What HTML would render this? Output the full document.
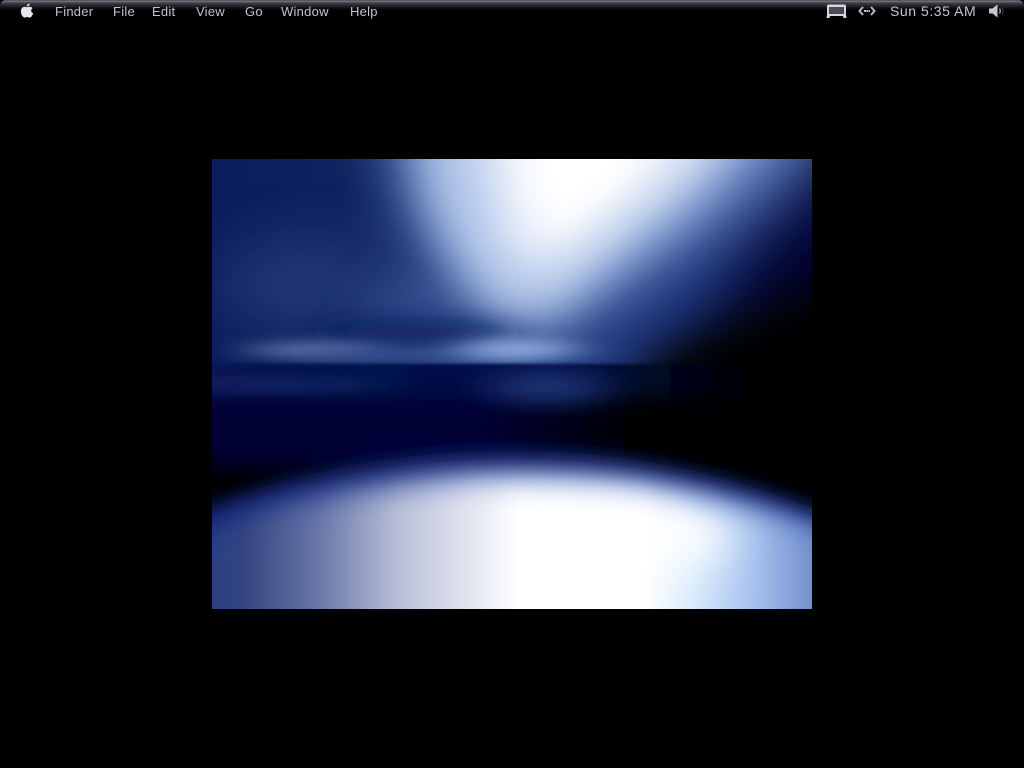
<!DOCTYPE html>
<html><head><meta charset="utf-8"><style>
html,body{margin:0;padding:0;background:#000;width:1024px;height:768px;overflow:hidden}
#bar{position:absolute;left:0;top:0;width:1024px;height:10px;background:linear-gradient(#2a2a30 0,#85858c 1px,#55555c 2px,#33333a 4px,#1a1a1f 7px,#000 10px);border-radius:6px 6px 0 0}
.m{position:absolute;top:4px;font:13px/15px "Liberation Sans",sans-serif;letter-spacing:.25px;color:#c4c4c8;white-space:nowrap}
svg{position:absolute}
</style></head><body>
<svg style="left:212px;top:159px" width="600" height="450" viewBox="0 0 600 450">
<defs>
<clipPath id="c"><rect width="600" height="450"/></clipPath>
<filter id="e1" filterUnits="userSpaceOnUse" x="-200" y="-200" width="1000" height="900"><feGaussianBlur stdDeviation="1.2"/></filter>
<filter id="h" filterUnits="userSpaceOnUse" x="-200" y="-200" width="1000" height="900"><feGaussianBlur stdDeviation="24 6"/></filter>
<filter id="h2" filterUnits="userSpaceOnUse" x="-200" y="-200" width="1000" height="900"><feGaussianBlur stdDeviation="22 10"/></filter>
<filter id="b8" filterUnits="userSpaceOnUse" x="-200" y="-200" width="1000" height="900"><feGaussianBlur stdDeviation="9"/></filter>
<filter id="b12" filterUnits="userSpaceOnUse" x="-200" y="-200" width="1000" height="900"><feGaussianBlur stdDeviation="12"/></filter>
<filter id="b13" filterUnits="userSpaceOnUse" x="-200" y="-200" width="1000" height="900"><feGaussianBlur stdDeviation="13"/></filter>
<filter id="b20" filterUnits="userSpaceOnUse" x="-200" y="-200" width="1000" height="900"><feGaussianBlur stdDeviation="22"/></filter>
<filter id="b30" filterUnits="userSpaceOnUse" x="-200" y="-200" width="1000" height="900"><feGaussianBlur stdDeviation="30"/></filter>
<mask id="curve" maskUnits="userSpaceOnUse" x="-100" y="200" width="800" height="300">
<path d="M-60 395 C60 348 180 328 300 326 C430 326 530 345 660 395 L660 500 L-60 500Z" fill="#fff" filter="url(#b12)"/>
</mask>
<linearGradient id="bot" gradientUnits="userSpaceOnUse" x1="0" x2="600" y1="0" y2="0">
<stop offset="0" stop-color="#2b3f85"/><stop offset=".05" stop-color="#33447f"/><stop offset=".18" stop-color="#6a78a8"/><stop offset=".31" stop-color="#b9bfd8"/><stop offset=".44" stop-color="#e6e8f2"/><stop offset=".51" stop-color="#fff"/><stop offset=".72" stop-color="#fff"/><stop offset=".8" stop-color="#d8eafc"/><stop offset=".9" stop-color="#a8c2ee"/><stop offset="1" stop-color="#7390cc"/>
</linearGradient>
<linearGradient id="edge" gradientUnits="userSpaceOnUse" x1="0" x2="600" y1="0" y2="0">
<stop offset="0" stop-color="#1c3080"/><stop offset=".2" stop-color="#4c60a4"/><stop offset=".45" stop-color="#98aadc"/><stop offset=".7" stop-color="#a4bae8"/><stop offset="1" stop-color="#5a78c0"/>
</linearGradient>
<linearGradient id="top" x1="0" x2="1" y1="0" y2="0">
<stop offset="0" stop-color="#0b1d5c"/><stop offset=".22" stop-color="#10225f"/><stop offset=".5" stop-color="#2a4688"/><stop offset=".8" stop-color="#162c70"/><stop offset="1" stop-color="#081248"/>
</linearGradient>
<linearGradient id="nav" x1="0" x2="1" y1="0" y2="0">
<stop offset="0" stop-color="#071650"/><stop offset=".55" stop-color="#050f48"/><stop offset=".85" stop-color="#000"/><stop offset="1" stop-color="#000"/>
</linearGradient>
<linearGradient id="nav2" x1="0" x2="1" y1="0" y2="0">
<stop offset="0" stop-color="#000534"/><stop offset=".45" stop-color="#000534"/><stop offset=".68" stop-color="#000"/><stop offset="1" stop-color="#000"/>
</linearGradient>
</defs>
<g clip-path="url(#c)">
<rect width="600" height="450" fill="#000"/>
<rect width="600" height="215" fill="url(#top)"/>
<ellipse cx="90" cy="125" rx="85" ry="40" fill="#2a3f7e" filter="url(#b30)" opacity=".8"/>
<ellipse cx="215" cy="145" rx="70" ry="22" fill="#34508f" filter="url(#b20)"/>
<polygon points="660,20 680,130 510,170 560,90" fill="#01052e" filter="url(#b30)" opacity=".95"/>
<polygon points="170,-60 640,-60 585,20 490,90 410,140 320,170 240,130 200,60" fill="#5a78b8" filter="url(#b30)"/>
<polygon points="200,-50 570,-50 490,40 395,115 345,160 285,160 245,105 215,40" fill="#b4c8ea" filter="url(#b20)"/>
<polygon points="270,-40 510,-40 445,30 375,85 330,110 295,85 285,40" fill="#f4f7fd" filter="url(#b20)"/>
<polygon points="315,-40 450,-40 405,25 350,65 325,35" fill="#fff" filter="url(#b13)"/>
<polygon points="680,100 680,300 420,300 430,205 500,165 600,125" fill="#000" filter="url(#b20)"/>
<ellipse cx="205" cy="172" rx="95" ry="9" fill="#0c2060" filter="url(#h2)"/>
<ellipse cx="105" cy="191" rx="70" ry="9" fill="#5a6ca4" filter="url(#h)"/>
<ellipse cx="200" cy="196" rx="100" ry="7" fill="#34508f" filter="url(#h)"/>
<ellipse cx="305" cy="191" rx="58" ry="12" fill="#86a2d6" filter="url(#h)"/>
<rect x="-60" y="205" width="720" height="60" fill="url(#nav)" filter="url(#e1)"/>
<rect x="-60" y="238" width="720" height="70" fill="url(#nav2)" filter="url(#h2)"/>
<ellipse cx="70" cy="226" rx="100" ry="6" fill="#122466" filter="url(#h)"/>
<ellipse cx="335" cy="228" rx="60" ry="16" fill="#1a3272" filter="url(#h2)"/>
<path d="M-60 372 C60 314 180 292 300 292 C430 292 530 318 660 372 L660 500 L-60 500Z" fill="#0c1e68" filter="url(#b8)"/>
<path d="M-60 386 C60 333 180 311 300 311 C430 311 530 333 660 386 L660 500 L-60 500Z" fill="url(#edge)" filter="url(#b12)"/>
<g mask="url(#curve)">
<rect x="-20" y="250" width="640" height="220" fill="url(#bot)"/>
<ellipse cx="425" cy="378" rx="95" ry="34" fill="#fff" filter="url(#b20)"/>
</g>
</g>
</svg>
<div id="bar"></div>
<svg style="left:20px;top:3px" width="14" height="16" viewBox="0 0 14 16"><path d="M9.600.6C9.700 2.300 8.300 3.600 6.800 3.500 6.700 2 8 .8 9.600.6ZM7 4.300C7.800 4.300 8.600 3.700 9.800 3.700 10.800 3.700 11.900 4.200 12.600 5.200 10.500 6.400 10.800 9.300 13.200 10.200 12.600 12 11.200 14.600 9.700 14.600 8.700 14.600 8.300 14 7.100 14 5.900 14 5.400 14.600 4.500 14.600 2.900 14.600.9 11.400.9 8.500.9 5.600 2.700 3.800 4.600 3.800 5.500 3.800 6.300 4.300 7 4.300Z" fill="#e6e6ea"/></svg>
<div class="m" style="left:55px">Finder</div>
<div class="m" style="left:113px">File</div>
<div class="m" style="left:152px">Edit</div>
<div class="m" style="left:196px">View</div>
<div class="m" style="left:245px">Go</div>
<div class="m" style="left:281px">Window</div>
<div class="m" style="left:350px">Help</div>
<svg style="left:826px;top:3px" width="22" height="16" viewBox="0 0 22 16"><path d="M3 1.500H18A2 2 0 0 1 20 3.500V12L20.500 15H17.500L17 13H4L3.500 15H.5L1 12V3.500A2 2 0 0 1 3 1.500Z" fill="#d6d6de"/><rect x="3" y="4" width="15" height="7" fill="#4a4b55"/></svg>
<svg style="left:857px;top:5px" width="20" height="12" viewBox="0 0 20 12"><path d="M6 2L2.500 6L6 10M14 2L17.500 6L14 10" fill="none" stroke="#b8b8c0" stroke-width="2"/><path d="M7 6H13" stroke="#c6c6ce" stroke-width="2" stroke-dasharray="2 .5"/></svg>
<div class="m" style="left:890px;font-size:14px;letter-spacing:.55px;color:#c8c8cc">Sun 5:35 AM</div>
<svg style="left:988px;top:3px" width="20" height="16" viewBox="0 0 20 16"><path d="M1 5.500H4.500L9.500 1.500V14.500L4.500 10.500H1Z" fill="#c6c6d2"/><path d="M11.500 5.500Q13 8 11.500 10.500" fill="none" stroke="#a8a8b2" stroke-width="1.400"/><path d="M14 4Q16 8 14 12" fill="none" stroke="#3c3c44" stroke-width="1"/></svg>
</body></html>
